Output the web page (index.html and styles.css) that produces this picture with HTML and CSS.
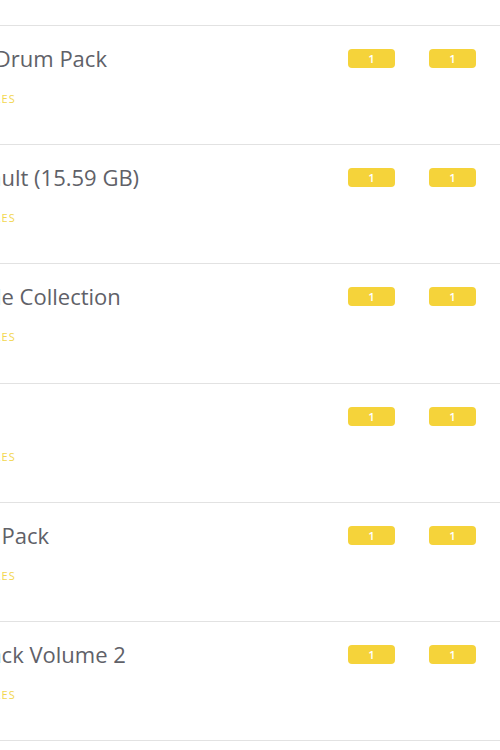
FILE: index.html
```html
<!DOCTYPE html>
<html>
<head>
  <meta charset="UTF-8">
  <title>Downloads</title>
  <link rel="stylesheet" href="styles.css">
</head>
<body>
  <div class="downloads">
    <div class="row">
      <div class="info">
        <div class="title">Vintage Funk Drum Pack</div>
        <div class="files">View all included files</div>
      </div>
      <span class="badge">1</span>
      <span class="badge">1</span>
    </div>
    <div class="row">
      <div class="info">
        <div class="title">Big Sample Vault (15.59 GB)</div>
        <div class="files">View all included files</div>
      </div>
      <span class="badge">1</span>
      <span class="badge">1</span>
    </div>
    <div class="row">
      <div class="info">
        <div class="title">Eclectic Sample Collection</div>
        <div class="files">View all included files</div>
      </div>
      <span class="badge">1</span>
      <span class="badge">1</span>
    </div>
    <div class="row">
      <div class="info">
        <div class="title">Bonus</div>
        <div class="files">View all included files</div>
      </div>
      <span class="badge">1</span>
      <span class="badge">1</span>
    </div>
    <div class="row">
      <div class="info">
        <div class="title">Eclectic Synth Pack</div>
        <div class="files">View all included files</div>
      </div>
      <span class="badge">1</span>
      <span class="badge">1</span>
    </div>
    <div class="row">
      <div class="info">
        <div class="title">Rock Drum Pack Volume 2</div>
        <div class="files">View all included files</div>
      </div>
      <span class="badge">1</span>
      <span class="badge">1</span>
    </div>
  </div>
</body>
</html>
```

FILE: styles.css
```css
* {
  box-sizing: border-box;
}
body {
  margin: 0;
  font-family: "Open Sans", sans-serif;
  background-color: #fff;
  overflow: hidden;
}
/* the list is wider than the window, its left side runs off screen */
.downloads {
  margin-top: 25px;
  margin-left: -143px;
  width: 643px;
  border-bottom: 1px solid #e2e2e2;
}
.row {
  display: flex;
  align-items: flex-start;
  height: 119.2px;
  border-top: 1px solid #e2e2e2;
  padding-right: 24px;
}
.info {
  flex: 1;
  padding-top: 17px;
}
.title {
  font-size: 22px;
  line-height: 30px;
  color: #606168;
  white-space: nowrap;
}
.files {
  margin-top: 18px;
  font-size: 11px;
  letter-spacing: 1.1px;
  text-transform: uppercase;
  white-space: nowrap;
  color: #f2d64e;
}
.badge {
  width: 47px;
  height: 19px;
  margin-top: 23px;
  margin-left: 34px;
  border-radius: 4px;
  background-color: #f5d33a;
  color: #fff;
  font-size: 11.5px;
  font-weight: 600;
  line-height: 19px;
  text-align: center;
}
```
